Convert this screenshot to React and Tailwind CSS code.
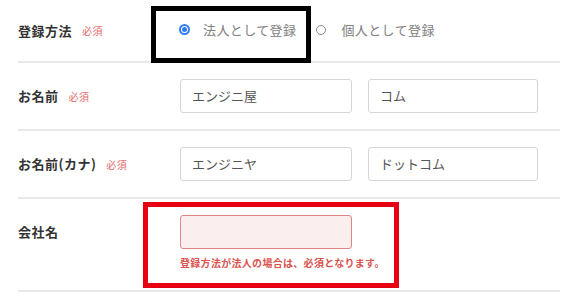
export default function App() {
  const font = { fontFamily: '"Noto Sans CJK JP", "Noto Sans", sans-serif' };

  const Required = () => (
    <span className="ml-[10px] text-[10px] text-[#e26a6a] font-normal">必須</span>
  );

  return (
    <div className="relative w-[586px] h-[300px] bg-white overflow-hidden" style={font}>
      <div className="ml-[18px] w-[542px]">
        {/* 登録方法 */}
        <div className="flex items-center h-[63px] border-b-2 border-[#e8e8e8]">
          <div className="w-[162px] flex items-center text-[13px] font-bold text-[#333] tracking-[0.5px]">
            登録方法<Required />
          </div>
          <div className="flex items-center text-[13px] text-[#808080] tracking-[0.4px] -mt-[2px]">
            <span className="w-[11px] h-[11px] rounded-full border-[2px] border-[#2f7cf6] flex items-center justify-center ml-[-1px]">
              <span className="w-[5px] h-[5px] rounded-full bg-[#2f7cf6]" />
            </span>
            <span className="ml-[13px]">法人として登録</span>
            <span className="ml-[20px] w-[10px] h-[10px] rounded-full border-[1.5px] border-[#8a8a8a]" />
            <span className="ml-[15px]">個人として登録</span>
          </div>
        </div>

        {/* お名前 */}
        <div className="flex items-center h-[68px] border-b-2 border-[#e8e8e8]">
          <div className="w-[162px] flex items-center text-[13px] font-bold text-[#333] tracking-[0.5px]">
            お名前<Required />
          </div>
          <div className="flex gap-[16px]">
            <div className="w-[172px] h-[34px] border border-[#d6d6d6] rounded-[3px] flex items-center pl-[11px] text-[13px] text-[#555]">エンジニ屋</div>
            <div className="w-[170px] h-[34px] border border-[#d6d6d6] rounded-[3px] flex items-center pl-[11px] text-[13px] text-[#555]">コム</div>
          </div>
        </div>

        {/* お名前(カナ) */}
        <div className="flex items-center h-[68px] border-b-2 border-[#e8e8e8]">
          <div className="w-[162px] flex items-center text-[13px] font-bold text-[#333] tracking-[0.5px]">
            お名前(カナ)<Required />
          </div>
          <div className="flex gap-[16px]">
            <div className="w-[172px] h-[34px] border border-[#d6d6d6] rounded-[3px] flex items-center pl-[11px] text-[13px] text-[#555]">エンジニヤ</div>
            <div className="w-[170px] h-[34px] border border-[#d6d6d6] rounded-[3px] flex items-center pl-[11px] text-[13px] text-[#555]">ドットコム</div>
          </div>
        </div>

        {/* 会社名 */}
        <div className="flex h-[93px] border-b-2 border-[#e8e8e8] pt-[16px]">
          <div className="w-[162px] h-[34px] flex items-center text-[13px] font-bold text-[#333] tracking-[0.5px]">
            会社名
          </div>
          <div className="flex flex-col">
            <div className="w-[172px] h-[34px] border border-[#e08585] bg-[#fbeeee] rounded-[3px]" />
            <div className="mt-[6px] text-[10px] font-bold text-[#d9534f] tracking-[0.3px]">
              登録方法が法人の場合は、必須となります。
            </div>
          </div>
        </div>
      </div>

      {/* annotation frames */}
      <div className="absolute left-[151px] top-[6px] w-[160px] h-[57px] border-[5px] border-black pointer-events-none" />
      <div className="absolute left-[143px] top-[202px] w-[256px] h-[86px] border-[5px] border-[#e60012] pointer-events-none" />
    </div>
  );
}
